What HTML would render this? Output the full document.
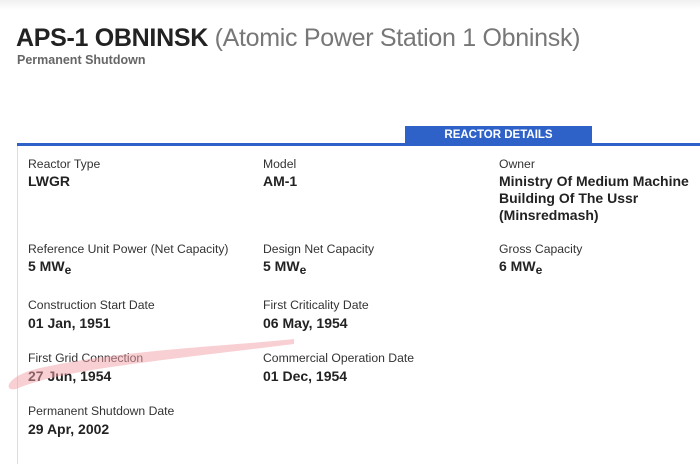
<!DOCTYPE html>
<html><head><style>
body{margin:0;width:700px;height:464px;background:#fff;font-family:"Liberation Sans",Arial,sans-serif;position:relative;overflow:hidden;color:#222}
.a{position:absolute;white-space:nowrap}
.l{font-size:12.2px;color:#333}
.v{font-size:14px;font-weight:bold;color:#222;line-height:17px}
sub{font-size:12px;vertical-align:-3px}
</style></head><body>
<div class="a" style="left:0;top:0;width:700px;height:10px;background:linear-gradient(#f0f0f0,#fff)"></div>
<div class="a" style="left:16px;top:24px;font-size:25px;color:#222;letter-spacing:-0.3px"><b>APS-1 OBNINSK</b> <span style="color:#777">(Atomic Power Station 1 Obninsk)</span></div>
<div class="a" style="left:17px;top:53px;font-size:12.5px;font-weight:bold;color:#666">Permanent Shutdown</div>
<div class="a" style="left:405px;top:126px;width:187px;height:18px;background:#2f62c8;color:#fff;font-size:11.5px;font-weight:bold;text-align:center;line-height:19px">REACTOR DETAILS</div>
<div class="a" style="left:17px;top:143px;width:683px;height:3px;background:#2f62c8"></div>
<div class="a" style="left:17px;top:146px;width:1px;height:318px;background:#ddd"></div>

<div class="a l" style="left:28px;top:157px">Reactor Type</div>
<div class="a v" style="left:28px;top:173px">LWGR</div>
<div class="a l" style="left:263px;top:157px">Model</div>
<div class="a v" style="left:263px;top:173px">AM-1</div>
<div class="a l" style="left:499px;top:157px">Owner</div>
<div class="a v" style="left:499px;top:173px">Ministry Of Medium Machine<br>Building Of The Ussr<br>(Minsredmash)</div>

<div class="a l" style="left:28px;top:242px">Reference Unit Power (Net Capacity)</div>
<div class="a v" style="left:28px;top:258px">5 MW<sub>e</sub></div>
<div class="a l" style="left:263px;top:242px">Design Net Capacity</div>
<div class="a v" style="left:263px;top:258px">5 MW<sub>e</sub></div>
<div class="a l" style="left:499px;top:242px">Gross Capacity</div>
<div class="a v" style="left:499px;top:258px">6 MW<sub>e</sub></div>

<div class="a l" style="left:28px;top:298px">Construction Start Date</div>
<div class="a v" style="left:28px;top:315px">01 Jan, 1951</div>
<div class="a l" style="left:263px;top:298px">First Criticality Date</div>
<div class="a v" style="left:263px;top:315px">06 May, 1954</div>

<div class="a l" style="left:28px;top:351px">First Grid Connection</div>
<div class="a v" style="left:28px;top:368px">27 Jun, 1954</div>
<div class="a l" style="left:263px;top:351px">Commercial Operation Date</div>
<div class="a v" style="left:263px;top:368px">01 Dec, 1954</div>

<div class="a l" style="left:28px;top:404px">Permanent Shutdown Date</div>
<div class="a v" style="left:28px;top:421px">29 Apr, 2002</div>

<svg class="a" style="left:0;top:0" width="700" height="464"><path d="M294 339 C230 346 120 350 40 368 C5 376 3 392 16 389 C60 370 150 362 294 344 Z" fill="#f2a0a8" opacity="0.5"/></svg>
</body></html>
